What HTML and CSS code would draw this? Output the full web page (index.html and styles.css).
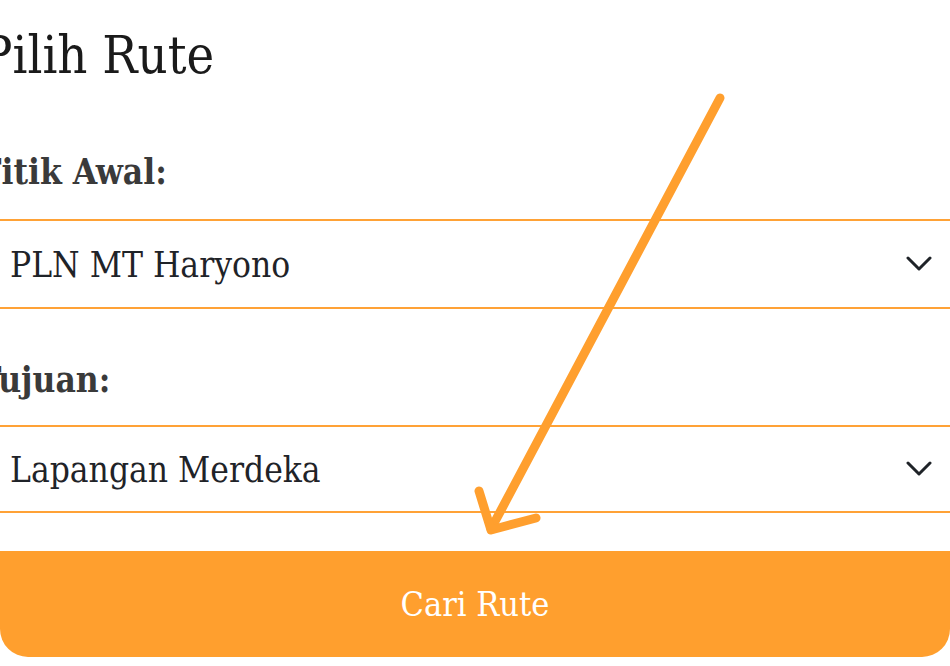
FILE: index.html
```html
<!DOCTYPE html>
<html lang="id">
<head>
<meta charset="utf-8">
<title>Pilih Rute</title>
<link rel="stylesheet" href="styles.css">
</head>
<body>
<main class="page">
  <h1 class="title">Pilih Rute</h1>
  <div class="field">
    <label class="label">Titik Awal:</label>
    <div class="select">
      <span class="select-text">PLN MT Haryono</span>
      <svg class="chevron" width="26" height="16" viewBox="0 0 26 16"><path d="M2 2 L13 13 L24 2" fill="none" stroke="#1f2328" stroke-width="3" stroke-linecap="round" stroke-linejoin="round"/></svg>
    </div>
  </div>
  <div class="field field-second">
    <label class="label">Tujuan:</label>
    <div class="select">
      <span class="select-text">Lapangan Merdeka</span>
      <svg class="chevron" width="26" height="16" viewBox="0 0 26 16"><path d="M2 2 L13 13 L24 2" fill="none" stroke="#1f2328" stroke-width="3" stroke-linecap="round" stroke-linejoin="round"/></svg>
    </div>
  </div>
  <button class="btn">Cari Rute</button>
</main>
<svg class="arrow" width="950" height="666" viewBox="0 0 950 666">
  <g fill="none" stroke="#ff9f2e" stroke-width="9" stroke-linecap="round" stroke-linejoin="round">
    <path d="M720 98 L491 529"/>
    <path d="M479 491 L491 530 L536 518"/>
  </g>
</svg>
</body>
</html>
```
FILE: styles.css
```css
html, body {
  margin: 0;
  padding: 0;
  background: #ffffff;
  overflow: hidden;
}
body {
  width: 950px;
  height: 666px;
  position: relative;
  font-family: "DejaVu Serif Condensed", "DejaVu Serif", serif;
  font-stretch: condensed;
}
.page {
  display: flex;
  flex-direction: column;
  padding-top: 29px;
}
.title {
  margin: 0 0 0 -19px;
  font-size: 52px;
  line-height: 52px;
  font-weight: normal;
  color: #1a1a1a;
}
.field {
  display: flex;
  flex-direction: column;
  margin-top: 73px;
}
.field-second {
  margin-top: 53px;
}
.label {
  margin-left: -22px;
  font-size: 35px;
  line-height: 35px;
  font-weight: bold;
  color: #3a3a3a;
}
.select {
  margin: 30px -10px 0 -10px;
  height: 83px;
  padding: 3px 26px 0 18px;
  border: 2px solid #ffa236;
  display: flex;
  align-items: center;
  justify-content: space-between;
  background: #fff;
}
.field-second .select {
  margin-top: 28px;
  height: 81px;
}
.select-text {
  font-size: 35px;
  line-height: 35px;
  color: #1f2328;
}
.chevron {
  display: block;
  margin-top: -3px;
}
.btn {
  margin: 38px 0 0 0;
  width: 950px;
  height: 106px;
  border: none;
  border-radius: 0 0 28px 28px;
  background: #ff9f2e;
  color: #ffffff;
  font-family: "DejaVu Serif Condensed", "DejaVu Serif", serif;
  font-stretch: condensed;
  font-size: 34px;
  padding: 0;
}
.arrow {
  position: absolute;
  left: 0;
  top: 0;
  pointer-events: none;
}
```
